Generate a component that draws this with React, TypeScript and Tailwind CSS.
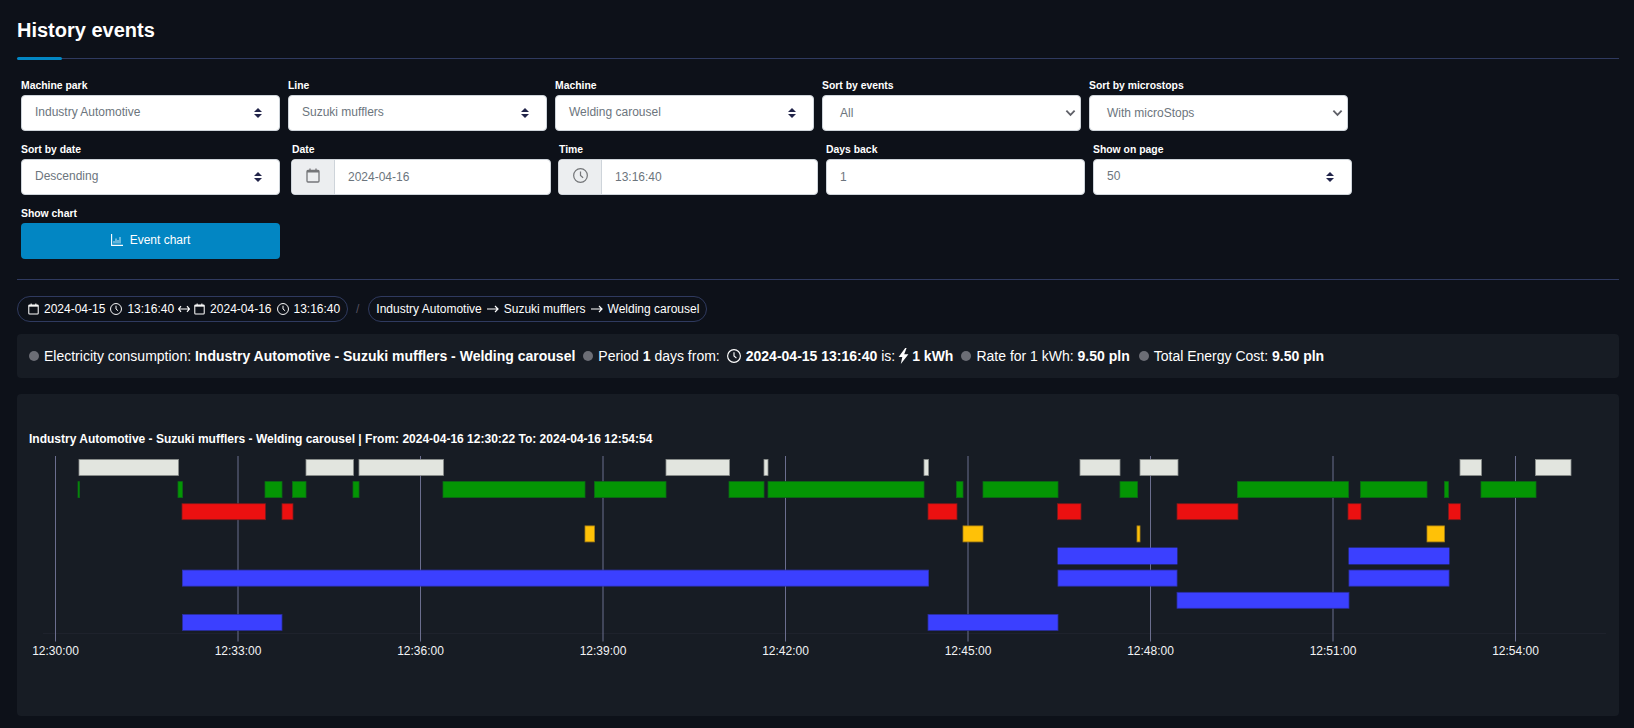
import type { ReactNode } from "react";

type Bar = [number, number];

const WHITE: Bar[] = [[79, 178.5], [306, 353.5], [359, 443.5], [666, 729.5], [764, 768], [924, 928.5], [1080, 1120], [1140, 1178], [1460, 1481.5], [1535.5, 1571]];
const GREEN: Bar[] = [[78, 79.5], [178, 182.5], [265, 282], [292.5, 306], [353, 359], [443, 585], [594.5, 666], [729, 764], [768, 924], [956.5, 963], [983, 1058], [1120, 1137.5], [1237.5, 1348.5], [1360.5, 1427], [1444.5, 1448.5], [1481, 1536]];
const RED: Bar[] = [[182, 265.5], [282, 293], [928, 957], [1057.5, 1081], [1177, 1238], [1348, 1361], [1448.5, 1460.5]];
const YELLOW: Bar[] = [[585, 594.5], [963, 983], [1137, 1140], [1427, 1444.5]];
const BLUE_5: Bar[] = [[1058, 1177], [1349, 1449]];
const BLUE_6: Bar[] = [[182.5, 928.5], [1058, 1177], [1349, 1449]];
const BLUE_7: Bar[] = [[1177, 1349]];
const BLUE_8: Bar[] = [[182.5, 282], [928, 1058]];

const ROWS = [
  { y: 459.5, bars: WHITE, fill: "#e2e5df", stroke: "#8b8e8c" },
  { y: 481.6, bars: GREEN, fill: "#049604", stroke: "#0a6b14" },
  { y: 503.7, bars: RED, fill: "#ec1010", stroke: "#7c1a1c" },
  { y: 525.9, bars: YELLOW, fill: "#ffc107", stroke: "#a77f14" },
  { y: 548, bars: BLUE_5, fill: "#3b40ff", stroke: "#3b40ff" },
  { y: 570.1, bars: BLUE_6, fill: "#3b40ff", stroke: "#2f33b8" },
  { y: 592.3, bars: BLUE_7, fill: "#3b40ff", stroke: "#2a2d9e" },
  { y: 614.4, bars: BLUE_8, fill: "#3b40ff", stroke: "#2a2d9e" },
];

const TICKS = [
  { x: 55.5, label: "12:30:00" },
  { x: 238, label: "12:33:00" },
  { x: 420.5, label: "12:36:00" },
  { x: 603, label: "12:39:00" },
  { x: 785.5, label: "12:42:00" },
  { x: 968, label: "12:45:00" },
  { x: 1150.5, label: "12:48:00" },
  { x: 1333, label: "12:51:00" },
  { x: 1515.5, label: "12:54:00" },
];

function CalendarIcon({ className }: { className?: string }) {
  return (
    <svg viewBox="0 0 14 15" fill="none" stroke="currentColor" className={className}>
      <rect x="1" y="2.5" width="12" height="11.5" rx="1" strokeWidth="1.3" />
      <path d="M1 3.5h12" strokeWidth="2" />
      <path d="M4 .5v2M10 .5v2" strokeWidth="1.3" />
    </svg>
  );
}

function ClockIcon({ className }: { className?: string }) {
  return (
    <svg viewBox="0 0 16 16" fill="none" stroke="currentColor" strokeWidth="1.3" className={className}>
      <circle cx="8" cy="8" r="7.3" />
      <path d="M8 3.600V8l2.800 2.400" />
    </svg>
  );
}

function ChartIcon() {
  return (
    <svg viewBox="0 0 12 12" fill="none" stroke="currentColor" className="h-3 w-3">
      <path d="M.6 0v11.400H12" strokeWidth="1.1" />
      <path d="M3 9.500V7M5 9.500V4.500M7 9.500V6M9 9.500V3" strokeWidth="1" opacity="0.8" />
    </svg>
  );
}

function BoltIcon() {
  return (
    <svg viewBox="0 0 11 16" fill="currentColor" className="mx-[3px] h-4 w-[11px]">
      <path d="M7.200 0 .6 9h3.700L2.800 16l7.600-9.800H6.200L8.600 0z" />
    </svg>
  );
}

function SortArrows() {
  return (
    <svg viewBox="0 0 8 10" fill="#22254a" className="h-[10px] w-2 shrink-0">
      <path d="M4 0l4 4H0zM0 6h8l-4 4z" />
    </svg>
  );
}

function ArrowRight() {
  return (
    <svg viewBox="0 0 12 8" fill="none" stroke="currentColor" strokeWidth="1.2" className="h-2 w-3 shrink-0">
      <path d="M0 4h11M8 1l3 3-3 3" />
    </svg>
  );
}

function Field({ label, className, indent, children }: { label: string; className: string; indent?: boolean; children: ReactNode }) {
  return (
    <div className={className}>
      <div className={`mb-[2px] h-[14px] text-[10.4px] leading-[14px] font-bold text-white ${indent ? "pl-px" : ""}`}>{label}</div>
      {children}
    </div>
  );
}

function FakeSelect({ value }: { value: string }) {
  return (
    <div className="flex h-9 items-center justify-between rounded border border-[#ced4da] bg-white pr-[17px] pb-[3px] pl-[13px] text-xs text-[#6c757d]">
      <span>{value}</span>
      <span className="pt-[3px]">
        <SortArrows />
      </span>
    </div>
  );
}

function NativeSelect({ value }: { value: string }) {
  return (
    <div className="flex h-9 items-center justify-between rounded border border-[#ced4da] bg-white pr-1 pb-px pl-[17px] text-xs text-[#6c757d]">
      <span>{value}</span>
      <svg viewBox="0 0 12 8" fill="none" stroke="#5f6068" strokeWidth="2" className="h-2 w-[11px]">
        <path d="M1.500 1.500 6 6l4.500-4.500" />
      </svg>
    </div>
  );
}

function AddonInput({ icon, value }: { icon: ReactNode; value: string }) {
  return (
    <div className="flex h-9 overflow-hidden rounded border border-[#ced4da] bg-white text-xs text-[#6c757d]">
      <div className="flex w-[43px] shrink-0 items-center justify-center border-r border-[#ced4da] bg-[#eceef0] pb-[3px] text-[#747679]">
        {icon}
      </div>
      <div className="flex items-center pl-[13px]">{value}</div>
    </div>
  );
}

function Dot() {
  return <span className="mr-[5px] inline-block h-[10px] w-[10px] shrink-0 rounded-full bg-[#6c6e76]" />;
}

export default function App() {
  return (
    <div className="min-h-screen bg-[#0d1119] pr-[15px] pl-[17px] font-['Liberation_Sans',Arial,sans-serif] text-white">
      {/* header */}
      <div className="pt-[18px]">
        <h1 className="h-[24px] text-xl leading-[24px] font-bold">History events</h1>
        <div className="relative mt-[16px] h-px bg-[#2f3a5f]">
          <div className="absolute -top-px left-0 h-[3px] w-[45px] rounded-full bg-[#0286c3]" />
        </div>
      </div>

      {/* filters */}
      <div className="mt-[20px] flex pl-1">
        <Field label="Machine park" className="w-[259px]">
          <FakeSelect value="Industry Automotive" />
        </Field>
        <Field label="Line" className="ml-2 w-[259px]">
          <FakeSelect value="Suzuki mufflers" />
        </Field>
        <Field label="Machine" className="ml-2 w-[259px]">
          <FakeSelect value="Welding carousel" />
        </Field>
        <Field label="Sort by events" className="ml-2 w-[259px]">
          <NativeSelect value="All" />
        </Field>
        <Field label="Sort by microstops" className="ml-2 w-[259px]">
          <NativeSelect value="With microStops" />
        </Field>
      </div>
      <div className="mt-3 flex pl-1">
        <Field label="Sort by date" className="w-[259px]">
          <FakeSelect value="Descending" />
        </Field>
        <Field label="Date" indent className="ml-[11px] w-[260px]">
          <AddonInput icon={<CalendarIcon className="h-[15px] w-[14px]" />} value="2024-04-16" />
        </Field>
        <Field label="Time" indent className="ml-[7px] w-[260px]">
          <AddonInput icon={<ClockIcon className="h-[15px] w-[15px]" />} value="13:16:40" />
        </Field>
        <Field label="Days back" className="ml-2 w-[259px]">
          <div className="flex h-9 items-center rounded border border-[#ced4da] bg-white pl-[13px] text-xs text-[#6c757d]">1</div>
        </Field>
        <Field label="Show on page" className="ml-2 w-[259px]">
          <FakeSelect value="50" />
        </Field>
      </div>
      <div className="mt-3 flex pl-1">
        <Field label="Show chart" className="w-[259px]">
          <div className="flex h-9 items-center justify-center gap-[7px] rounded bg-[#0286c3] pb-[2px] text-xs text-white">
            <ChartIcon />
            <span>Event chart</span>
          </div>
        </Field>
      </div>

      <div className="mt-[20px] h-px bg-[#2f3a5f]" />

      {/* breadcrumbs */}
      <div className="mt-[16px] flex items-center text-xs">
        <div className="flex h-[26px] w-[331px] items-center rounded-full border border-[#2f3a5f] pl-[10px]">
          <CalendarIcon className="h-[12px] w-[11px]" />
          <span className="ml-[5px]">2024-04-15</span>
          <ClockIcon className="ml-[5px] h-3 w-3" />
          <span className="ml-[5px]">13:16:40</span>
          <svg viewBox="0 0 12 8" fill="none" stroke="currentColor" strokeWidth="1.2" className="mx-1 h-2 w-3">
            <path d="M0.500 4h11M3 1.200.5 4 3 6.800M9 1.200 11.500 4 9 6.800" />
          </svg>
          <CalendarIcon className="h-[12px] w-[11px]" />
          <span className="ml-[5px]">2024-04-16</span>
          <ClockIcon className="ml-[5.5px] h-3 w-3" />
          <span className="ml-[4.5px]">13:16:40</span>
        </div>
        <span className="ml-[8px] text-[#55505f]">/</span>
        <div className="ml-[9px] flex h-[26px] w-[339px] items-center gap-[5px] rounded-full border border-[#2f3a5f] pl-[7px]">
          <span>Industry Automotive</span>
          <ArrowRight />
          <span>Suzuki mufflers</span>
          <ArrowRight />
          <span>Welding carousel</span>
        </div>
      </div>

      {/* energy summary */}
      <div className="mt-[12px] flex h-[44px] items-center rounded bg-[#171c24] pl-3 text-sm leading-none">
        <Dot />
        <span>Electricity consumption:&nbsp;</span>
        <b>Industry Automotive - Suzuki mufflers - Welding carousel</b>
        <span className="ml-2 flex items-center">
          <Dot />
          <span>Period&nbsp;</span>
          <b>1</b>
          <span>&nbsp;days from:</span>
        </span>
        <ClockIcon className="mr-[5px] ml-[7px] h-[14px] w-[14px]" />
        <b>2024-04-15 13:16:40</b>
        <span>&nbsp;is:</span>
        <BoltIcon />
        <b>1 kWh</b>
        <span className="ml-2 flex items-center">
          <Dot />
          <span>Rate for 1 kWh:&nbsp;</span>
          <b>9.50 pln</b>
        </span>
        <span className="ml-[9px] flex items-center">
          <Dot />
          <span>Total Energy Cost:&nbsp;</span>
          <b>9.50 pln</b>
        </span>
      </div>

      {/* timeline */}
      <div className="mt-[16px] h-[322px] rounded bg-[#171c24] pt-[38px]">
        <div className="h-[14px] pl-3 text-xs leading-[15px] font-bold">
          Industry Automotive - Suzuki mufflers - Welding carousel | From: 2024-04-16 12:30:22 To: 2024-04-16 12:54:54
        </div>
        <svg viewBox="17 446 1602 270" className="block h-[270px] w-full">
          <line x1="43" x2="1606" y1="633.500" y2="633.500" stroke="#1e222c" />
          {TICKS.map((t) => (
            <g key={t.label}>
              <line x1={t.x} x2={t.x} y1="456" y2="641.500" stroke="#6b6e8e" />
              <text x={t.x} y="655" textAnchor="middle" fontSize="12" fill="#f2f3f5">
                {t.label}
              </text>
            </g>
          ))}
          {ROWS.map((row) =>
            row.bars.map(([from, to]) => (
              <rect
                key={`${row.y}-${from}`}
                x={from}
                y={row.y}
                width={to - from}
                height="16"
                fill={row.fill}
                stroke={row.stroke}
                strokeWidth="0.8"
              />
            ))
          )}
        </svg>
      </div>
    </div>
  );
}
